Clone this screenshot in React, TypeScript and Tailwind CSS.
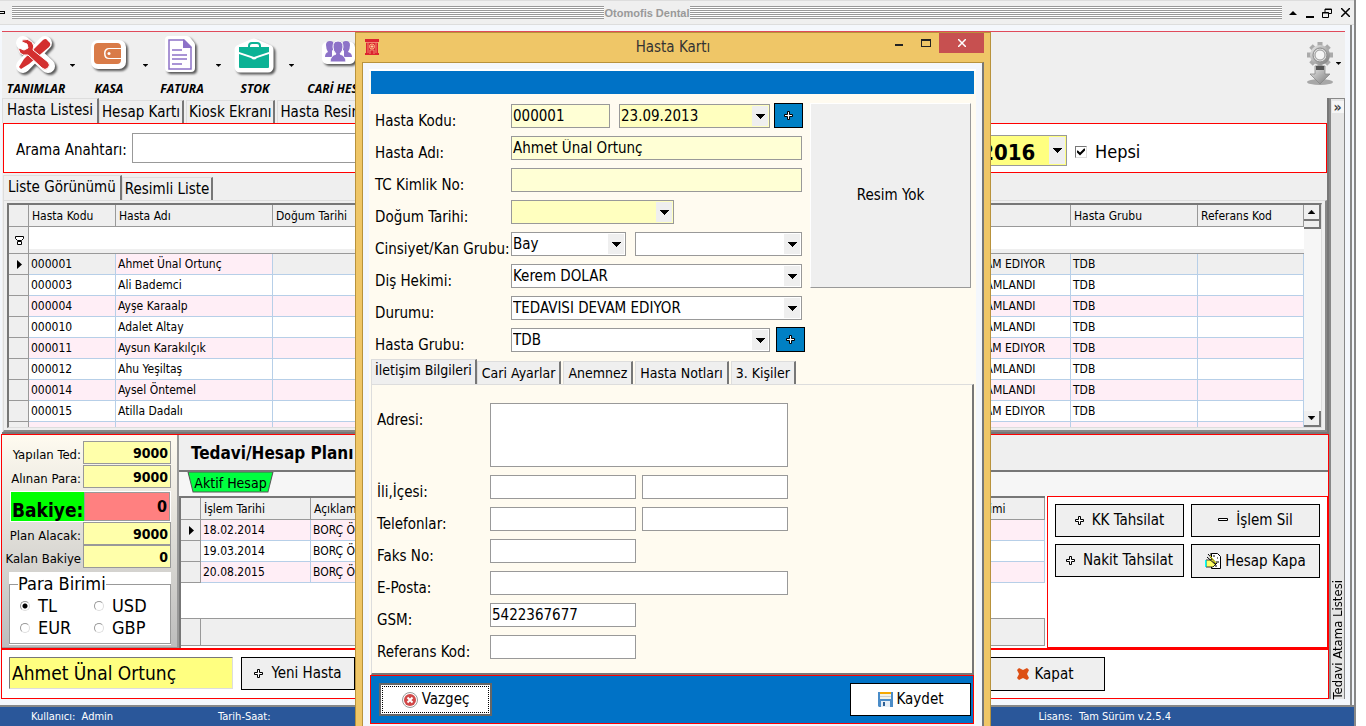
import type { ReactNode } from 'react';
import clsx from 'clsx';

const patients = [
    { code: '000001', name: 'Ahmet Ünal Ortunç', status: 'TEDAVISI DEVAM EDIYOR', group: 'TDB' },
    { code: '000003', name: 'Ali Bademci', status: 'TEDAVISI TAMAMLANDI', group: 'TDB' },
    { code: '000004', name: 'Ayşe Karaalp', status: 'TEDAVISI TAMAMLANDI', group: 'TDB' },
    { code: '000010', name: 'Adalet Altay', status: 'TEDAVISI TAMAMLANDI', group: 'TDB' },
    { code: '000011', name: 'Aysun Karakılçık', status: 'TEDAVISI DEVAM EDIYOR', group: 'TDB' },
    { code: '000012', name: 'Ahu Yeşiltaş', status: 'TEDAVISI TAMAMLANDI', group: 'TDB' },
    { code: '000014', name: 'Aysel Öntemel', status: 'TEDAVISI TAMAMLANDI', group: 'TDB' },
    { code: '000015', name: 'Atilla Dadalı', status: 'TEDAVISI DEVAM EDIYOR', group: 'TDB' },
    { code: '', name: '', status: '', group: '' },
];

const payments = ['18.02.2014', '19.03.2014', '20.08.2015'];

function Caret({ className = 'h-[5px] w-[9px]' }: { className?: string }) {
    return (
        <svg viewBox="0 0 9 5" className={className} aria-hidden="true">
            <path d="M0 0h9v1H8v1H7v1H6v1H5v1H4V4H3V3H2V2H1V1H0z" />
        </svg>
    );
}

function RowArrow() {
    return (
        <svg viewBox="0 0 5 9" className="ml-2 h-[9px] w-[5px]" aria-hidden="true">
            <path d="M0 0l5 4.5L0 9z" />
        </svg>
    );
}

function PlusIcon() {
    return (
        <svg viewBox="0 0 9 9" className="h-[9px] w-[9px] shrink-0" aria-hidden="true">
            <path d="M3.5 .5h2v3h3v2h-3v3h-2v-3h-3v-2h3z" fill="#fff" stroke="#000" />
        </svg>
    );
}

function MinusIcon() {
    return (
        <svg viewBox="0 0 10 9" className="h-[9px] w-2.5 shrink-0" aria-hidden="true">
            <path d="M.5 2.500h9v2h-9z" fill="#fff" stroke="#000" />
        </svg>
    );
}

/* Toolbar stickers: white halo, soft drop shadow, coloured glyph on top */
function Sticker({ halo, children }: { halo: ReactNode; children: ReactNode }) {
    return (
        <svg viewBox="0 0 48 44" className="h-11 w-12 drop-shadow-[2px_2px_1px_rgba(50,50,50,0.8)]" aria-hidden="true">
            <g fill="#fff" stroke="#fff" strokeWidth="8" strokeLinejoin="round" strokeLinecap="round">
                {halo}
            </g>
            {children}
        </svg>
    );
}

function ToolsIcon() {
    return (
        <Sticker halo={<path d="M11 9l25 23M33 9L11 32" strokeWidth="14" />}>
            <path d="M31 6q3-2 4 0l3 3q1 2-1 4L17 30l-8 5-2-2 5-8z" fill="#d32f2f" />
            <path d="M10 6q6-2 10 2 3 4 1 8l15 12q3 3 0 6-3 3-6 0L16 21q-5 1-8-2-2-4-1-5l5 2 4-2-1-4-5-2z" fill="#d32f2f" stroke="#fff" strokeWidth="1" />
        </Sticker>
    );
}

function WalletIcon() {
    return (
        <Sticker halo={<rect x="10" y="10" width="27" height="21" rx="3" />}>
            <path d="M13 9h19q4 0 4 4v1H24q-5 0-5 5.500t5 5.500h12v1q0 4-4 4H13q-4 0-4-4V13q0-4 4-4z" fill="#d97b48" />
            <path d="M36 15H25q-4.500 0-4.500 4.500T25 24h11z" fill="#d97b48" />
            <circle cx="24" cy="19.500" r="1.500" fill="#fff" />
        </Sticker>
    );
}

function InvoiceIcon() {
    return (
        <Sticker halo={<path d="M11 6h18l4 5v23H11z" strokeWidth="8" />}>
            <path d="M11 6h15l7 7v22H11z" fill="#fff" stroke="#8d72c8" strokeWidth="1.500" />
            <path d="M25 5v9h9z" fill="#8d72c8" />
            <path d="M14 16h10M14 21h15M14 25h15M14 30h10" stroke="#8d72c8" strokeWidth="1.500" />
        </Sticker>
    );
}

function BriefcaseIcon() {
    return (
        <Sticker halo={<path d="M9 16l14-6 14 6v17H9z" strokeWidth="11" />}>
            <path d="M18 14v-2q0-3 3-3h5q3 0 3 3v2" fill="none" stroke="#0bb295" strokeWidth="2" />
            <path d="M8 13h30v5l-15 5-15-5z" fill="#0bb295" />
            <path d="M8 20l12 4q3 3 6 0l12-4v13q0 1-1 1H9q-1 0-1-1z" fill="#0bb295" />
        </Sticker>
    );
}

function PeopleIcon() {
    return (
        <Sticker halo={<path d="M11 13h23v12H11z" strokeWidth="10" />}>
            <g fill="#8d72c8">
                <path d="M10 11q0-4 4-4t4 4q0 4-2 6v6H9q0-4 3-5-2-3-2-7z" />
                <path d="M26 11q0-4 4-4t4 4q0 4-2 7 4 1 4 5h-8v-6q-2-2-2-6z" />
                <path d="M14 28q0-6 6-8-3-3-3-7 0-6 5-6t5 6q0 4-3 7 6 2 6 8z" stroke="#fff" strokeWidth="1" />
            </g>
        </Sticker>
    );
}

function GearIcon() {
    return (
        <svg viewBox="0 0 30 46" className="h-[46px] w-[30px]" aria-hidden="true">
            <defs>
                <linearGradient id="metal" x1="0" y1="0" x2="1" y2="1">
                    <stop offset="0" stopColor="#eee" />
                    <stop offset="1" stopColor="#777" />
                </linearGradient>
            </defs>
            <ellipse cx="14" cy="42" rx="13" ry="3" fill="#777" opacity=".6" />
            <g stroke="#aaa" strokeWidth="5">
                <path d="M14 2v26M1 15h26M5 6l18 18M23 6L5 24" />
            </g>
            <circle cx="14" cy="15" r="10" fill="url(#metal)" />
            <circle cx="14" cy="15" r="7" fill="#ddd" stroke="#888" />
            <circle cx="14" cy="15" r="5" fill="#f5f5f5" stroke="#999" />
            <path d="M9 26h10v8h5l-10 10L4 34h5z" fill="url(#metal)" stroke="#888" strokeWidth=".8" />
            <path d="M10 26h8v4h-8z" fill="#555" />
        </svg>
    );
}

function ToolbarItem({ label, wide, children }: { label: string; wide?: boolean; children: ReactNode }) {
    return (
        <div className="flex items-center">
            <button
                type="button"
                className={clsx(
                    "flex flex-col items-center gap-[3px] font-['Open_Sans',sans-serif] text-xs leading-4 font-bold italic",
                    wide ? 'w-[92px]' : 'w-[68px]'
                )}
            >
                {children}
                <span className="whitespace-nowrap">{label}</span>
            </button>
            <Caret className="h-[3px] w-[5px]" />
        </div>
    );
}

function Tabs({ items, roomy, className }: { items: string[]; roomy?: boolean; className?: string }) {
    return (
        <div role="tablist" className={clsx('flex items-end', className)}>
            {items.map((item, i) => (
                <button
                    key={item}
                    type="button"
                    role="tab"
                    aria-selected={i === 0}
                    className={clsx(
                        'border-t border-r-2 border-l border-t-[#ddd] border-r-[#777] border-l-[#ddd] bg-[#efefef] whitespace-nowrap',
                        i === 0 ? 'h-[25px] pb-1' : 'mr-0.5 h-[23px]',
                        (i === 0) === !roomy ? 'px-1' : roomy ? 'px-[3px]' : 'px-0.5'
                    )}
                >
                    {item}
                </button>
            ))}
        </div>
    );
}

interface ComboProps {
    id: string;
    value?: string;
    className: string;
    selectClass?: string;
}

function Combo({ id, value = '', className, selectClass = 'bg-white' }: ComboProps) {
    return (
        <div className={clsx('relative border border-[#999]', className)}>
            <select id={id} aria-label={id} defaultValue={value} className={clsx('block h-full w-full appearance-none pr-5 pl-px outline-none', selectClass)}>
                <option value={value}>{value}</option>
            </select>
            <span className="pointer-events-none absolute inset-y-px right-px flex w-4 items-center justify-center bg-[#efefef]">
                <Caret />
            </span>
        </div>
    );
}

function Field({ label, htmlFor, children }: { label: string; htmlFor: string; children: ReactNode }) {
    return (
        <div className="flex h-6">
            <label htmlFor={htmlFor} className="w-34 shrink-0 pt-[7px] leading-5 whitespace-nowrap">
                {label}
            </label>
            {children}
        </div>
    );
}

function ContactField({ label, htmlFor, children }: { label: string; htmlFor: string; children: ReactNode }) {
    return (
        <div className="flex h-6">
            <label htmlFor={htmlFor} className="w-[113px] shrink-0 pt-[7px] leading-5 whitespace-nowrap">
                {label}
            </label>
            <div className="flex gap-1.5">{children}</div>
        </div>
    );
}

const inputBox = 'h-6 border border-[#999] px-px outline-none';
const yellowBox = 'h-[23px] w-[88px] border border-[#999] bg-[#ffffaa] pr-0.5 text-right text-sm font-bold outline-none';
const actionButton = 'flex items-center justify-center border border-black bg-[#efefef] text-[15px] whitespace-nowrap';

function TitleBar() {
    return (
        <header className="flex h-[25px] items-center border-t border-b border-[#ddd] bg-[#efefef]">
            <span className="h-[3px] w-[5px] border border-l-0 border-black" />
            <div className="ml-[7px] flex flex-1 items-center">
                <div className="h-[13px] flex-1 bg-[repeating-linear-gradient(to_bottom,#999_0_1px,#fff_1px_2px)]" />
                <h1 className="px-px font-['Liberation_Sans',sans-serif] text-[11px] leading-4 font-bold text-[#999]">Otomofis Dental</h1>
                <div className="h-[13px] flex-1 bg-[repeating-linear-gradient(to_bottom,#999_0_1px,#fff_1px_2px)]" />
            </div>
            <div className="flex w-[72px] items-center justify-between pr-1 pl-[7px]">
                <button type="button" aria-label="Yukarı">
                    <svg viewBox="0 0 8 4" className="h-1 w-2"><path d="M4 0l4 4H0z" /></svg>
                </button>
                <button type="button" aria-label="Simge durumu">
                    <svg viewBox="0 0 8 10" className="h-2.5 w-2"><path d="M0 8h8v2H0z" /></svg>
                </button>
                <button type="button" aria-label="Önceki boyut">
                    <svg viewBox="0 0 10 10" className="h-2.5 w-2.5" fill="none" stroke="#000"><path d="M3 4V1h6.500v4.500H7M3 1.500h7M.5 4.500h6v5h-6zM0 5h7" /></svg>
                </button>
                <button type="button" aria-label="Kapat">
                    <svg viewBox="0 0 9 9" className="h-[9px] w-[9px]" stroke="#000" strokeWidth="1.500"><path d="M0 0l9 9M9 0L0 9" /></svg>
                </button>
            </div>
        </header>
    );
}

function PatientGrid() {
    return (
        <div className="flex h-[225px] border-t-2 border-r border-b border-l-2 border-t-[#777] border-r-[#ddd] border-b-[#ddd] border-l-[#777] bg-white text-xs">
            <div className="min-w-0 flex-1 overflow-hidden">
                <table className="w-full table-fixed border-separate border-spacing-0 text-left">
                    <colgroup>
                        <col className="w-5" />
                        <col className="w-[87px]" />
                        <col className="w-[157px]" />
                        <col className="w-[120px]" />
                        <col />
                        <col className="w-[162px]" />
                        <col className="w-[127px]" />
                        <col className="w-[106px]" />
                    </colgroup>
                    <thead>
                        <tr className="h-[22px] bg-[#efefef]">
                            {['', 'Hasta Kodu', 'Hasta Adı', 'Doğum Tarihi', ' ', 'Durumu', 'Hasta Grubu', 'Referans Kod'].map((head) => (
                                <th key={head} className="border-r border-b border-[#999] px-[3px] font-normal">{head}</th>
                            ))}
                        </tr>
                        <tr className="h-[27px]">
                            <th className="border-r border-b border-[#999] bg-[#efefef] pl-1.5">
                                <svg viewBox="0 0 9 9" className="h-[9px] w-[9px]" fill="#fff" stroke="#000"><path d="M.5 .5h8v2l-2 2h-4l-2-2zM2.500 5.500h4v3h-4z" /></svg>
                            </th>
                            <td colSpan={7} className="border-b border-[#999] shadow-[inset_0_-4px_#efefef]" />
                        </tr>
                    </thead>
                    <tbody>
                        {patients.map((p, i) => {
                            const tint = i === 0 ? 'bg-[#efefef]' : i % 2 === 0 ? 'bg-[#ffeef6]' : 'bg-white';
                            const cell = clsx('border-r border-b border-[#b7cfe8] px-0.5 whitespace-nowrap', tint);
                            return (
                                <tr key={i} className="h-[21px]">
                                    <td className="border-r border-b border-[#999] bg-[#efefef]">{i === 0 && <RowArrow />}</td>
                                    <td className={cell}>{p.code}</td>
                                    <td className={clsx(cell, i === 0 && 'bg-[#ffeef6]!')}>{p.name}</td>
                                    <td className={cell} />
                                    <td className={cell} />
                                    <td className={cell}>{p.status}</td>
                                    <td className={cell}>{p.group}</td>
                                    <td className={cell} />
                                </tr>
                            );
                        })}
                    </tbody>
                </table>
            </div>
            <div className="flex w-[17px] flex-col bg-[#f6f6f6]">
                <div className="flex h-4 items-center justify-center border-r-2 border-b-2 border-[#777] bg-[#efefef]"><Caret className="h-1 w-[7px] rotate-180" /></div>
                <div className="h-2 border-r-2 border-b-2 border-[#777] bg-[#efefef]" />
                <div className="mt-auto flex h-4 items-center justify-center border-r-2 border-b-2 border-[#777] bg-[#efefef]"><Caret className="h-1 w-[7px]" /></div>
            </div>
        </div>
    );
}

function SummaryPanel() {
    return (
        <section className="flex w-[177px] shrink-0 flex-col border-r-2 border-b border-[#999] bg-gradient-to-b from-[#fffbf0] to-[#bdbdbd] pt-1.5 pr-1.5 pb-1 pl-1 text-[13px] leading-[19px]">
            <div className="flex items-center justify-end gap-0.5">
                <label htmlFor="done" className="pt-1">Yapılan Ted:</label>
                <input id="done" className={yellowBox} defaultValue="9000" />
            </div>
            <div className="mt-px flex items-center justify-end gap-0.5">
                <label htmlFor="paid" className="pt-1">Alınan Para:</label>
                <input id="paid" className={yellowBox} defaultValue="9000" />
            </div>
            <div className="mt-[3px] ml-1 flex h-[31px] items-stretch border border-white bg-[#00ff00]">
                <label htmlFor="balance" className="w-[73px] pt-1.5 pl-px text-[19px] leading-6 font-bold">Bakiye:</label>
                <input id="balance" className="min-w-0 flex-1 border border-[#999] bg-[#ff8080] pr-0.5 text-right text-base font-bold outline-none" defaultValue="0" />
            </div>
            <div className="flex items-center justify-end gap-0.5">
                <label htmlFor="plan" className="pt-1">Plan Alacak:</label>
                <input id="plan" className={yellowBox} defaultValue="9000" />
            </div>
            <div className="flex items-center justify-end gap-0.5">
                <label htmlFor="left" className="pt-1 whitespace-nowrap">Kalan Bakiye</label>
                <input id="left" className={yellowBox} defaultValue="0" />
            </div>
            <div className="mt-1 ml-[3px] bg-white pb-px">
                <fieldset className="border border-[#999] px-2 pb-1 text-lg leading-[22px]">
                    <legend className="leading-6">Para Birimi</legend>
                    <div className="-mt-px grid grid-cols-2 gap-x-1">
                        {['TL', 'USD', 'EUR', 'GBP'].map((currency) => (
                            <label key={currency} className="flex items-center gap-2 pl-0.5">
                                <input
                                    type="radio"
                                    name="currency"
                                    defaultChecked={currency === 'TL'}
                                    className="h-2.5 w-2.5 appearance-none rounded-full border border-[#999] border-r-[#ddd] border-b-[#ddd] bg-white checked:bg-[radial-gradient(circle,#000_2px,#fff_3px)]"
                                />
                                {currency}
                            </label>
                        ))}
                    </div>
                </fieldset>
            </div>
        </section>
    );
}

function AccountPanel() {
    return (
        <section className="flex min-w-0 flex-1 flex-col">
            <h2 className="flex h-[35px] items-center bg-[#efefef] pt-0.5 pl-3 text-[17px] font-bold">Tedavi/Hesap Planı</h2>
            <div className="flex h-[26px] border-t-2 border-[#777] bg-[#f6f6f6] pl-2">
                <button type="button" className="relative h-[21px] w-[87px] text-sm leading-5">
                    <svg viewBox="0 0 86 21" preserveAspectRatio="none" className="absolute inset-0 h-full w-full" aria-hidden="true">
                        <path d="M1 0h84l-5 20H6z" fill="#00ff40" stroke="#555" />
                    </svg>
                    <span className="relative">Aktif Hesap</span>
                </button>
            </div>
            <div className="flex flex-1">
                <div className="flex min-w-0 flex-1 flex-col border-t-2 border-l-2 border-[#777] bg-white text-xs">
                    <table className="w-full table-fixed border-separate border-spacing-0 text-left">
                        <colgroup>
                            <col className="w-5" />
                            <col className="w-[110px]" />
                            <col />
                            <col className="w-[110px]" />
                        </colgroup>
                        <thead>
                            <tr className="h-[22px] bg-[#efefef]">
                                {['', 'İşlem Tarihi', 'Açıklama', 'Para Birimi'].map((head) => (
                                    <th key={head} className="border-r border-b border-[#999] px-[3px] font-normal last:pl-3">{head}</th>
                                ))}
                            </tr>
                        </thead>
                        <tbody>
                            {payments.map((date, i) => {
                                const cell = clsx('border-r border-b border-[#b7cfe8] px-0.5', i % 2 === 0 ? 'bg-[#ffeef6]' : 'bg-white');
                                return (
                                    <tr key={date} className="h-[21px]">
                                        <td className="border-r border-b border-[#999] bg-[#efefef]">{i === 0 && <RowArrow />}</td>
                                        <td className={cell}>{date}</td>
                                        <td className={cell}>BORÇ Ö.</td>
                                        <td className={cell} />
                                    </tr>
                                );
                            })}
                        </tbody>
                    </table>
                    <div className="mt-auto mb-0.5 flex h-7 border-y border-r border-[#999] bg-[#efefef]">
                        <div className="w-5 border-r border-[#999]" />
                    </div>
                </div>
                <div className="ml-0.5 w-[281px] border border-[#f00] bg-white p-[7px]">
                    <div className="grid grid-cols-2 gap-[7px]">
                        <button type="button" className={clsx(actionButton, 'h-[33px] gap-2')}><PlusIcon />KK Tahsilat</button>
                        <button type="button" className={clsx(actionButton, 'h-[33px] gap-2')}><MinusIcon />İşlem Sil</button>
                        <button type="button" className={clsx(actionButton, 'h-[33px] gap-2')}><PlusIcon />Nakit Tahsilat</button>
                        <button type="button" className={clsx(actionButton, 'h-[34px] gap-1')}>
                            <svg viewBox="0 0 16 16" className="h-4 w-4" aria-hidden="true">
                                <path d="M6.500 .5h6l3 3v12h-9z" fill="#fff" stroke="#000" />
                                <path d="M8 3h2M8 12h2M11 9h3M10 13h2M12 5h1" stroke="#000" />
                                <path d="M1 7h4l2-1 4 5-3 3H1z" fill="#ffff66" stroke="#000" strokeWidth=".8" />
                                <path d="M0 7h1.500v7H0z" fill="#0ff" />
                                <path d="M3 1l9 10M2 4l9 8M6 0v5" stroke="#000" />
                                <path d="M5 3l6 7" stroke="#ffff00" />
                            </svg>
                            Hesap Kapa
                        </button>
                    </div>
                </div>
            </div>
        </section>
    );
}

function PatientCard() {
    return (
        <div role="dialog" aria-labelledby="card-title" className="absolute top-8 bottom-0 left-[355px] flex w-[636px] flex-col border-x border-t border-[#b8923c] bg-[#efc667] px-1.5 text-[15px]">
            <div className="relative flex h-[29px] items-center justify-center">
                <svg viewBox="0 0 14 16" className="absolute top-1.5 left-[3px] h-4 w-3.5" aria-hidden="true">
                    <path d="M0 0h14v3h-1v11h1v2H0v-2h1V3H0z" fill="#dc2430" />
                    <path d="M3 4v10M11 4v10M1 3.500h12M5 15v-4h4v4" stroke="#f4a080" strokeWidth=".8" fill="none" />
                    <circle cx="7" cy="7.500" r="2.500" fill="#dc2430" stroke="#ffc080" />
                    <path d="M7 6v3M5.500 7.500h3" stroke="#ffd0a0" />
                </svg>
                <h2 id="card-title" className="text-[#333]">Hasta Kartı</h2>
                <div className="absolute top-0 right-0 flex h-5 items-center">
                    <button type="button" aria-label="Simge durumu" className="mt-1 mr-[18px] h-0.5 w-2 bg-[#222]" />
                    <button type="button" aria-label="Büyüt" className="mr-2 h-2 w-2.5 border border-t-2 border-[#222]" />
                    <button type="button" aria-label="Pencereyi kapat" className="flex h-5 w-[45px] items-center justify-center bg-[#c75050]">
                        <svg viewBox="0 0 8 8" className="h-2 w-2" stroke="#fff" strokeWidth="1.500"><path d="M0 0l8 8M8 0L0 8" /></svg>
                    </button>
                </div>
            </div>

            <div className="flex flex-1 flex-col border-t border-r-2 border-l border-t-[#b8923c] border-r-[#777] border-l-[#b8923c] bg-[#f4f7fc] px-1.5 pt-1.5">
                <div className="flex flex-1 flex-col border-t-2 border-white bg-[#fffbf0] px-0.5">
                    <div className="h-[23px] bg-[#0072c6]" />

                    {/* Identity fields and photo */}
                    <div className="flex pt-[9px] pr-[3px] pl-1">
                        <div className="flex min-w-0 flex-1 flex-col gap-2 pt-px">
                            <Field label="Hasta Kodu:" htmlFor="code">
                                <input id="code" className={clsx(inputBox, 'mr-[9px] w-[99px] bg-[#ffffd5]')} defaultValue="000001" />
                                <Combo id="date" value="23.09.2013" className="mr-1 w-[151px]" selectClass="bg-[#ffffbf]" />
                                <button type="button" aria-label="Tarih ekle" className="-mt-px flex h-[25px] w-[29px] items-center justify-center border border-black bg-[#0080c4]"><PlusIcon /></button>
                            </Field>
                            <Field label="Hasta Adı:" htmlFor="name">
                                <input id="name" className={clsx(inputBox, 'w-[291px] bg-[#ffffd5]')} defaultValue="Ahmet Ünal Ortunç" />
                            </Field>
                            <Field label="TC Kimlik No:" htmlFor="tc">
                                <input id="tc" className={clsx(inputBox, 'w-[291px] bg-[#ffffd5]')} />
                            </Field>
                            <Field label="Doğum Tarihi:" htmlFor="birth">
                                <Combo id="birth" className="w-[163px]" selectClass="bg-[#ffffbf]" />
                            </Field>
                            <Field label="Cinsiyet/Kan Grubu:" htmlFor="sex">
                                <Combo id="sex" value="Bay" className="mr-[9px] w-[115px]" />
                                <Combo id="blood" className="w-[167px]" />
                            </Field>
                            <Field label="Diş Hekimi:" htmlFor="dentist">
                                <Combo id="dentist" value="Kerem DOLAR" className="w-[291px]" />
                            </Field>
                            <Field label="Durumu:" htmlFor="status">
                                <Combo id="status" value="TEDAVISI DEVAM EDIYOR" className="w-[291px]" />
                            </Field>
                            <Field label="Hasta Grubu:" htmlFor="group">
                                <Combo id="group" value="TDB" className="mr-1.5 w-[259px]" />
                                <button type="button" aria-label="Grup ekle" className="-mt-px flex h-[25px] w-[29px] shrink-0 items-center justify-center border border-black bg-[#0080c4]"><PlusIcon /></button>
                            </Field>
                        </div>
                        <div className="flex h-[185px] w-[161px] shrink-0 items-center justify-center border-t border-r border-b border-l border-t-white border-r-[#999] border-b-[#999] border-l-white bg-[#efefef]">Resim Yok</div>
                    </div>

                    <Tabs roomy items={['İletişim Bilgileri', 'Cari Ayarlar', 'Anemnez', 'Hasta Notları', '3. Kişiler']} className="mt-[7px] text-sm" />

                    {/* Contact tab */}
                    <div className="flex flex-col gap-2 border-t border-r-2 border-b-2 border-l border-t-[#ddd] border-r-[#777] border-b-[#777] border-l-[#ddd] pt-[18px] pb-3.5 pl-[5px]">
                        <div className="flex">
                            <label htmlFor="address" className="w-[113px] shrink-0 pt-[7px] leading-5">Adresi:</label>
                            <textarea id="address" className="block h-16 w-[298px] resize-none border border-[#999] bg-white outline-none" />
                        </div>
                        <ContactField label="İli,İçesi:" htmlFor="city">
                            <input id="city" className={clsx(inputBox, 'w-[146px] bg-white')} />
                            <input aria-label="İlçe" className={clsx(inputBox, 'w-[146px] bg-white')} />
                        </ContactField>
                        <ContactField label="Telefonlar:" htmlFor="phone">
                            <input id="phone" className={clsx(inputBox, 'w-[146px] bg-white')} />
                            <input aria-label="İkinci telefon" className={clsx(inputBox, 'w-[146px] bg-white')} />
                        </ContactField>
                        <ContactField label="Faks No:" htmlFor="fax">
                            <input id="fax" className={clsx(inputBox, 'w-[146px] bg-white')} />
                        </ContactField>
                        <ContactField label="E-Posta:" htmlFor="mail">
                            <input id="mail" className={clsx(inputBox, 'w-[298px] bg-white')} />
                        </ContactField>
                        <ContactField label="GSM:" htmlFor="gsm">
                            <input id="gsm" className={clsx(inputBox, 'w-[146px] bg-white')} defaultValue="5422367677" />
                        </ContactField>
                        <ContactField label="Referans Kod:" htmlFor="ref">
                            <input id="ref" className={clsx(inputBox, 'w-[146px] bg-white')} />
                        </ContactField>
                    </div>

                    <div className="-ml-px flex justify-between border border-[#f00] bg-[#0072c6] py-[7px] pr-0.5 pl-2">
                        <button type="button" className="h-[33px] w-[113px] border-2 border-[#666] bg-white p-px">
                            <span className="flex h-full items-center justify-center gap-1 border border-dotted border-black">
                                <svg viewBox="0 0 16 16" className="h-4 w-4" aria-hidden="true">
                                    <circle cx="8" cy="8" r="7.500" fill="#fff" stroke="#999" />
                                    <circle cx="8" cy="8" r="6" fill="#d04848" />
                                    <path d="M5.500 5.500l5 5M10.500 5.500l-5 5" stroke="#fff" strokeWidth="2" />
                                </svg>
                                Vazgeç
                            </span>
                        </button>
                        <button type="button" className="flex h-[33px] w-[121px] items-center justify-center gap-1 border border-black bg-white">
                            <svg viewBox="0 0 15 15" className="h-[15px] w-[15px]" aria-hidden="true">
                                <path d="M0 0h15v15H1l-1-1z" fill="#4a8cc8" />
                                <path d="M2 0h11v7H2z" fill="#f2f2e6" />
                                <path d="M2 0h11v2H2z" fill="#f5a800" />
                                <path d="M2 4.500h11" stroke="#ccc" />
                                <path d="M3 9h9v6H3z" fill="#e6eef6" />
                                <path d="M5 10h2v4H5z" fill="#2c5f94" />
                            </svg>
                            Kaydet
                        </button>
                    </div>
                    <div className="-mx-0.5 flex-1 bg-[#f4f7fc]" />
                </div>
            </div>
        </div>
    );
}

export default function App() {
    return (
        <div className="min-h-screen bg-white pr-2.5 font-['DejaVu_Sans_Condensed','DejaVu_Sans',sans-serif] text-black">
            <div className="relative flex min-h-screen flex-col overflow-hidden border-r-2 border-[#888] bg-[#f4f7fc]">
                <TitleBar />

                <div className="mr-0.5 flex flex-1 flex-col border-r-2 border-[#888] pt-1.5 pr-[5px] pl-0.5">
                    {/* Toolbar */}
                    <div className="flex h-[67px] items-start border-t border-[#e04a5a] bg-[#efefef] pt-0.5">
                        <ToolbarItem label="TANIMLAR"><ToolsIcon /></ToolbarItem>
                        <ToolbarItem label="KASA"><WalletIcon /></ToolbarItem>
                        <ToolbarItem label="FATURA"><InvoiceIcon /></ToolbarItem>
                        <ToolbarItem label="STOK"><BriefcaseIcon /></ToolbarItem>
                        <ToolbarItem label="CARİ HESAP" wide><PeopleIcon /></ToolbarItem>
                        <button type="button" aria-label="Ayarlar" className="mt-1.5 mr-1 ml-auto flex items-center"><GearIcon /><Caret className="h-[3px] w-[5px]" /></button>
                    </div>

                    <div className="flex flex-1">
                        <main className="flex min-w-0 flex-1 flex-col">
                            <div className="flex flex-col border-r-2 border-b-2 border-[#777] bg-[#efefef]">
                                <Tabs items={['Hasta Listesi', 'Hesap Kartı', 'Kiosk Ekranı', 'Hasta Resimleri']} className="text-[15px]" />
                                <div className="ml-px flex h-[50px] items-center border border-[#f00] bg-white pl-3 text-[15px]">
                                    <label htmlFor="search" className="w-[116px] pt-1 whitespace-nowrap">Arama Anahtarı:</label>
                                    <input id="search" className="h-[30px] w-[300px] border border-[#999] bg-white px-1 outline-none" />
                                    <Combo id="until" value="31.12.2016" className="mt-1 ml-auto h-[31px] w-[170px]" selectClass="bg-[#ffff80] pl-3! text-[22px] font-bold" />
                                    <label className="flex w-[259px] items-center gap-2 pt-2 pl-2 text-lg">
                                        <input type="checkbox" defaultChecked className="peer sr-only" />
                                        <span className="flex h-3 w-3 items-center justify-center border border-[#777] border-r-[#ddd] border-b-[#ddd] bg-white">
                                            <svg viewBox="0 0 8 8" className="h-2 w-2" fill="none" stroke="#000" strokeWidth="2"><path d="M0 3l3 3 5-5" /></svg>
                                        </span>
                                        Hepsi
                                    </label>
                                </div>
                                <Tabs items={['Liste Görünümü', 'Resimli Liste']} className="ml-px pt-0.5 text-[15px]" />
                                <div className="ml-px border-t border-r-2 border-b-2 border-l border-t-[#ddd] border-r-[#888] border-b-[#888] border-l-[#ddd] px-[3px] pt-0.5 pb-0.5">
                                    <PatientGrid />
                                </div>
                            </div>

                            <div className="-ml-px flex h-[216px] border border-b-2 border-[#f00] bg-white">
                                <SummaryPanel />
                                <AccountPanel />
                            </div>
                            <div className="-ml-px flex h-[49px] items-start border border-t-0 border-[#f00] bg-white pt-[7px] pl-[7px]">
                                <input aria-label="Seçili hasta" defaultValue="Ahmet Ünal Ortunç" className="mr-2 h-8 w-56 border border-t-[#777] border-r-[#ddd] border-b-[#ddd] border-l-[#777] bg-[#ffff80] px-0.5 text-[19px] outline-none" />
                                <button type="button" className={clsx(actionButton, 'h-[33px] w-[114px] gap-2')}><PlusIcon />Yeni Hasta</button>
                                <button type="button" className={clsx(actionButton, 'mr-[223px] ml-auto h-[34px] w-[120px] gap-1.5')}>
                                    <svg viewBox="0 0 12 12" className="h-3 w-3" aria-hidden="true">
                                        <path d="M0 2l2-2 4 2 4-2 2 2-2 4 2 4-2 2-4-2-4 2-2-2 2-4z" fill="#dd4f14" />
                                    </svg>
                                    Kapat
                                </button>
                            </div>
                        </main>

                        <aside className="flex w-4 flex-col items-center justify-between border-t border-r border-l-2 border-[#888] bg-[#e6e6e6]">
                            <button type="button" className="mt-0.5 h-3 w-3 bg-[#f6f6f6] text-sm leading-[10px] font-bold text-[#444]">»</button>
                            <span className="rotate-180 text-[13px] leading-[13px] whitespace-nowrap [writing-mode:vertical-rl]">Tedavi Atama Listesi</span>
                        </aside>
                    </div>
                    <div className="h-1.5 shrink-0" />
                </div>

                <footer className="flex h-[21px] items-center border-t-2 border-[#888] bg-[#2a579a] text-[11px] text-white">
                    <span className="w-[187px] pt-0.5 pl-[31px]">Kullanıcı:&nbsp; Admin</span>
                    <span className="pt-0.5 pl-[31px]">Tarih-Saat:</span>
                    <span className="mr-[183px] ml-auto pt-0.5">Lisans:&nbsp; Tam Sürüm v.2.5.4</span>
                </footer>

                <PatientCard />
            </div>
        </div>
    );
}
